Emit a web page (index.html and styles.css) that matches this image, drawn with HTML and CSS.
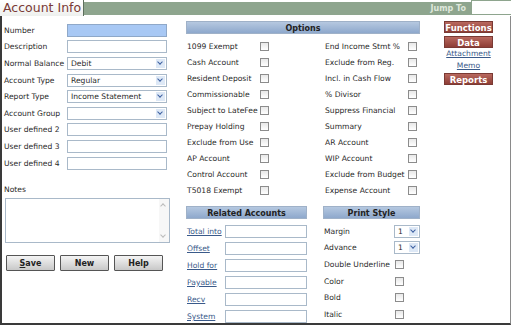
FILE: index.html
```html
<!DOCTYPE html>
<html lang="en">
<head>
    <meta charset="UTF-8">
    <title>Account Info</title>
    <link rel="stylesheet" href="styles.css">
</head>
<body>
    <div class="page">
        <div class="topbar">
            <div class="tab">Account Info</div>
            <div class="bar"><span class="jump-label">Jump To</span></div>
            <input class="jump" type="text">
        </div>

        <div class="content">
            <!-- left: account fields -->
            <div class="col-left">
                <div class="row"><label>Number</label><input class="field field-active" type="text"></div>
                <div class="row"><label>Description</label><input class="field" type="text"></div>
                <div class="row"><label>Normal Balance</label><div class="select">Debit<span class="arrow"></span></div></div>
                <div class="row"><label>Account Type</label><div class="select">Regular<span class="arrow"></span></div></div>
                <div class="row"><label>Report Type</label><div class="select">Income Statement<span class="arrow"></span></div></div>
                <div class="row"><label>Account Group</label><div class="select"><span class="arrow"></span></div></div>
                <div class="row"><label>User defined 2</label><input class="field" type="text"></div>
                <div class="row"><label>User defined 3</label><input class="field" type="text"></div>
                <div class="row"><label>User defined 4</label><input class="field" type="text"></div>

                <div class="notes-label">Notes</div>
                <div class="notes">
                    <div class="scroll"><span class="sc-up"></span><span class="sc-down"></span></div>
                </div>

                <div class="actions">
                    <button class="btn"><u>S</u>ave</button>
                    <button class="btn">New</button>
                    <button class="btn">Help</button>
                </div>
            </div>

            <!-- middle: options, related accounts, print style -->
            <div class="col-mid">
                <div class="panel-head">Options</div>
                <div class="options">
                    <div class="opt"><span class="opt-label">1099 Exempt</span><i class="cb"></i></div>
                    <div class="opt opt-r"><span class="opt-label">End Income Stmt %</span><i class="cb"></i></div>
                    <div class="opt"><span class="opt-label">Cash Account</span><i class="cb"></i></div>
                    <div class="opt opt-r"><span class="opt-label">Exclude from Reg.</span><i class="cb"></i></div>
                    <div class="opt"><span class="opt-label">Resident Deposit</span><i class="cb"></i></div>
                    <div class="opt opt-r"><span class="opt-label">Incl. in Cash Flow</span><i class="cb"></i></div>
                    <div class="opt"><span class="opt-label">Commissionable</span><i class="cb"></i></div>
                    <div class="opt opt-r"><span class="opt-label">% Divisor</span><i class="cb"></i></div>
                    <div class="opt"><span class="opt-label">Subject to LateFee</span><i class="cb"></i></div>
                    <div class="opt opt-r"><span class="opt-label">Suppress Financial</span><i class="cb"></i></div>
                    <div class="opt"><span class="opt-label">Prepay Holding</span><i class="cb"></i></div>
                    <div class="opt opt-r"><span class="opt-label">Summary</span><i class="cb"></i></div>
                    <div class="opt"><span class="opt-label">Exclude from Use</span><i class="cb"></i></div>
                    <div class="opt opt-r"><span class="opt-label">AR Account</span><i class="cb"></i></div>
                    <div class="opt"><span class="opt-label">AP Account</span><i class="cb"></i></div>
                    <div class="opt opt-r"><span class="opt-label">WIP Account</span><i class="cb"></i></div>
                    <div class="opt"><span class="opt-label">Control Account</span><i class="cb"></i></div>
                    <div class="opt opt-r"><span class="opt-label">Exclude from Budget</span><i class="cb"></i></div>
                    <div class="opt"><span class="opt-label">T5018 Exempt</span><i class="cb"></i></div>
                    <div class="opt opt-r"><span class="opt-label">Expense Account</span><i class="cb"></i></div>
                </div>

                <div class="lower">
                    <div class="related">
                        <div class="panel-head">Related Accounts</div>
                        <div class="rel-list">
                            <div class="rel-row"><a href="#">Total into</a><input class="field" type="text"></div>
                            <div class="rel-row"><a href="#">Offset</a><input class="field" type="text"></div>
                            <div class="rel-row"><a href="#">Hold for</a><input class="field" type="text"></div>
                            <div class="rel-row"><a href="#">Payable</a><input class="field" type="text"></div>
                            <div class="rel-row"><a href="#">Recv</a><input class="field" type="text"></div>
                            <div class="rel-row"><a href="#">System</a><input class="field" type="text"></div>
                        </div>
                    </div>
                    <div class="print">
                        <div class="panel-head">Print Style</div>
                        <div class="pr-list">
                            <div class="pr-row"><span class="pr-label">Margin</span><div class="select select-sm">1<span class="arrow"></span></div></div>
                            <div class="pr-row"><span class="pr-label">Advance</span><div class="select select-sm">1<span class="arrow"></span></div></div>
                            <div class="pr-row"><span class="pr-label">Double Underline</span><i class="cb"></i></div>
                            <div class="pr-row"><span class="pr-label">Color</span><i class="cb"></i></div>
                            <div class="pr-row"><span class="pr-label">Bold</span><i class="cb"></i></div>
                            <div class="pr-row"><span class="pr-label">Italic</span><i class="cb"></i></div>
                        </div>
                    </div>
                </div>
            </div>

            <!-- right: function menu -->
            <div class="col-right">
                <div class="menu-btn">Functions</div>
                <div class="menu-btn menu-btn-flush">Data</div>
                <a class="menu-link" href="#">Attachment</a>
                <a class="menu-link" href="#">Memo</a>
                <div class="menu-btn">Reports</div>
            </div>
        </div>
    </div>
</body>
</html>
```

FILE: styles.css
```css
body {
    margin: 0;
    background: #ffffff;
    font-family: "DejaVu Sans", Verdana, sans-serif;
    font-size: 7.6px;
    color: #2a2a2a;
}
.page {
    width: 511px;
    height: 328px;
    overflow: hidden;
}
.topbar {
    display: flex;
    align-items: flex-start;
    height: 16px;
}
.tab {
    width: 80px;
    height: 16px;
    padding-left: 3px;
    font-size: 12.5px;
    line-height: 16px;
    color: #7a3a36;
    background: linear-gradient(#ffffff, #eef0ee);
    border-right: 1px solid #5d6f5d;
}
.bar {
    flex: 1;
    height: 13px;
    margin-top: 2px;
    background: #8ea58e;
    display: flex;
    justify-content: flex-end;
    align-items: center;
    padding-right: 5px;
}
.jump-label {
    color: #dfe8dc;
    font-weight: bold;
    font-size: 8px;
}
.jump {
    width: 40px;
    height: 15px;
    box-sizing: border-box;
    border: 1px solid #8ea58e;
    border-right: none;
    margin: 0;
    padding: 0;
}
.content {
    display: flex;
    height: 307px;
    border-left: 2px solid #3a3a3a;
    border-right: 1px solid #8a8a8a;
    border-bottom: 2px solid #3a3a3a;
}
.col-left {
    width: 166px;
    padding: 6px 0 0 2px;
}
.row {
    display: flex;
    align-items: center;
    height: 16.6px;
}
.row label {
    width: 63px;
    white-space: nowrap;
}
.field {
    box-sizing: border-box;
    height: 13px;
    width: 100px;
    margin: 0;
    padding: 0;
    border: 1px solid #a9b9c9;
    background: #fff;
}
.field-active {
    background: #a8c8f4;
    border-color: #8fa8c8;
}
.select {
    position: relative;
    box-sizing: border-box;
    height: 13px;
    width: 100px;
    padding-left: 3px;
    line-height: 11px;
    border: 1px solid #a9b9c9;
    background: #fff;
}
.arrow {
    position: absolute;
    right: 1px;
    top: 1px;
    width: 9px;
    height: 9px;
    background: #dde8f6;
}
.arrow::after {
    content: "";
    position: absolute;
    left: 2px;
    top: 1px;
    width: 3px;
    height: 3px;
    border-right: 1.5px solid #3c5fa0;
    border-bottom: 1.5px solid #3c5fa0;
    transform: rotate(45deg);
}
.notes-label {
    margin-top: 14px;
    height: 13px;
}
.notes {
    position: relative;
    width: 165px;
    height: 45px;
    box-sizing: border-box;
    border: 1px solid #a9b9c9;
    margin-left: 1px;
}
.scroll {
    position: absolute;
    right: 0;
    top: 0;
    bottom: 0;
    width: 10px;
    background: #f7f7f7;
}
.sc-up, .sc-down {
    position: absolute;
    left: 2px;
    width: 3px;
    height: 3px;
    border-left: 1px solid #bbb;
    border-top: 1px solid #bbb;
}
.sc-up { top: 5px; transform: rotate(45deg); }
.sc-down { bottom: 5px; transform: rotate(225deg); }
.actions {
    display: flex;
    gap: 5px;
    margin: 12px 0 0 2px;
}
.btn {
    width: 49px;
    height: 16px;
    padding: 0;
    font-family: "DejaVu Sans", Verdana, sans-serif;
    font-size: 8px;
    font-weight: bold;
    color: #222;
    border: 1px solid #555;
    border-radius: 1px;
    background: linear-gradient(#f4f4f4, #c8c8c8);
}
.col-mid {
    width: 234px;
    margin-left: 16px;
    padding-top: 5px;
}
.panel-head {
    height: 13px;
    line-height: 13px;
    text-align: center;
    font-weight: bold;
    font-size: 8px;
    color: #222;
    background: linear-gradient(#b5c8e0, #8ea8cc);
    border: 1px solid #9fb1c8;
    box-sizing: border-box;
}
.options {
    display: grid;
    grid-template-columns: 86px 148px;
    margin-top: 4px;
}
.opt {
    display: flex;
    align-items: center;
    height: 16px;
    padding-left: 1px;
}
.opt-label {
    width: 73px;
    white-space: nowrap;
}
.opt-r {
    padding-left: 53px;
}
.opt-r .opt-label {
    width: 83px;
}
.cb {
    display: inline-block;
    width: 9px;
    height: 9px;
    box-sizing: border-box;
    border: 1px solid #8c8c8c;
    background: linear-gradient(#e8e8e8, #ffffff);
}
.lower {
    display: flex;
    gap: 16px;
    margin-top: 8px;
}
.related {
    width: 121px;
}
.rel-list {
    margin-top: 4px;
}
.rel-row {
    display: flex;
    align-items: center;
    height: 17px;
    padding-left: 1px;
}
.rel-row a {
    width: 38px;
    color: #3a5a8a;
    white-space: nowrap;
}
.rel-row .field {
    width: 82px;
}
.print {
    width: 97px;
}
.pr-list {
    margin-top: 4px;
}
.pr-row {
    display: flex;
    align-items: center;
    height: 16.6px;
    padding-left: 1px;
}
.pr-label {
    width: 71px;
    white-space: nowrap;
}
.select-sm {
    width: 26px;
    margin-left: -1px;
}
.col-right {
    margin-left: 24px;
    padding-top: 5px;
    width: 49px;
    display: flex;
    flex-direction: column;
    align-items: center;
}
.menu-btn {
    width: 49px;
    height: 12px;
    line-height: 12px;
    margin-bottom: 3px;
    text-align: center;
    font-weight: bold;
    font-size: 8.5px;
    color: #fff;
    background: linear-gradient(#b8685e, #8e3e36);
    border: 1px solid #7a3a34;
    box-sizing: border-box;
}
.menu-btn-flush {
    margin-bottom: 0;
}
.menu-link {
    color: #3a5a8a;
    font-size: 7.6px;
    line-height: 12px;
}
.menu-link + .menu-btn {
    margin-top: 1px;
}
```
